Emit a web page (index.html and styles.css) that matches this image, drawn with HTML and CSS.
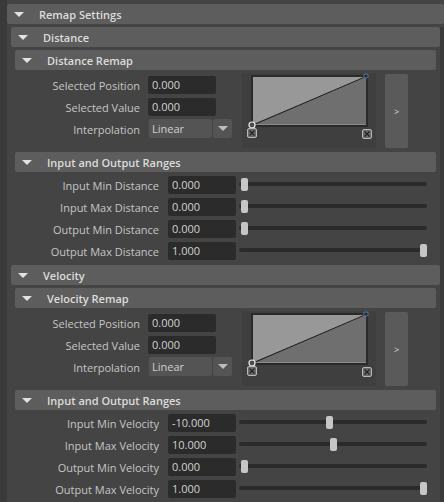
FILE: index.html
```html
<!DOCTYPE html>
<html>
<head>
<meta charset="utf-8">
<link rel="stylesheet" href="styles.css">
</head>
<body>
<div class="top">
  <div class="hdr"><span class="tri"></span>Remap Settings</div>
  <div class="top-body">

    <div class="lvl1">
      <div class="hdr"><span class="tri"></span>Distance</div>
      <div class="lvl1-body">
        <div class="lvl2">
          <div class="hdr"><span class="tri"></span>Distance Remap</div>
          <div class="remap">
            <div class="remap-left">
              <div class="row"><span class="lbl lbl-r">Selected Position</span><span class="field">0.000</span></div>
              <div class="row"><span class="lbl lbl-r">Selected Value</span><span class="field">0.000</span></div>
              <div class="row"><span class="lbl lbl-r">Interpolation</span>
                <span class="dd"><span class="dd-main">Linear</span><span class="dd-arrow"><span class="dd-tri"></span></span></span>
              </div>
            </div>
            <div class="graph">
              <svg width="134" height="75" viewBox="0 0 134 75">
                <rect x="10" y="3" width="115" height="50" fill="#6f6f6f" stroke="#2a2a2a" stroke-width="2"/>
                <polygon points="11,4 124,4 11,51" fill="#989898"/>
                <line x1="11" y1="52" x2="124" y2="3.5" stroke="#1c1c1c" stroke-width="1"/>
                <line x1="11" y1="51.5" x2="124" y2="51.5" stroke="#8a8a8a" stroke-width="1"/>
                <circle cx="124" cy="3" r="2.2" fill="none" stroke="#4a6a90" stroke-width="1.2"/>
                <circle cx="10" cy="52" r="3" fill="#4a4a4a" stroke="#eeeeee" stroke-width="1.2"/>
                <rect x="5.5" y="55.5" width="9" height="9" rx="1.5" fill="#6a6a6a" stroke="#b8b8b8"/>
                <path d="M7.5 57.5 L12.5 62.5 M12.5 57.5 L7.5 62.5" stroke="#222" stroke-width="1.2"/>
                <rect x="120.5" y="56.5" width="9" height="9" rx="1.5" fill="#6a6a6a" stroke="#b8b8b8"/>
                <path d="M122.5 58.5 L127.5 63.5 M127.5 58.5 L122.5 63.5" stroke="#222" stroke-width="1.2"/>
              </svg>
            </div>
            <div class="btn">&gt;</div>
          </div>
        </div>

        <div class="lvl2 ranges-frame">
          <div class="hdr"><span class="tri"></span>Input and Output Ranges</div>
          <div class="ranges">
            <div class="row"><span class="lbl lbl-w">Input Min Distance</span><span class="field">0.000</span><span class="slider"><span class="track"></span><span class="handle" style="left:2px"></span></span></div>
            <div class="row"><span class="lbl lbl-w">Input Max Distance</span><span class="field">0.000</span><span class="slider"><span class="track"></span><span class="handle" style="left:2px"></span></span></div>
            <div class="row"><span class="lbl lbl-w">Output Min Distance</span><span class="field">0.000</span><span class="slider"><span class="track"></span><span class="handle" style="left:2px"></span></span></div>
            <div class="row"><span class="lbl lbl-w">Output Max Distance</span><span class="field">1.000</span><span class="slider"><span class="track"></span><span class="handle" style="left:181px"></span></span></div>
          </div>
        </div>
      </div>
    </div>

    <div class="lvl1 lvl1-next">
      <div class="hdr"><span class="tri"></span>Velocity</div>
      <div class="lvl1-body">
        <div class="lvl2">
          <div class="hdr"><span class="tri"></span>Velocity Remap</div>
          <div class="remap">
            <div class="remap-left">
              <div class="row"><span class="lbl lbl-r">Selected Position</span><span class="field">0.000</span></div>
              <div class="row"><span class="lbl lbl-r">Selected Value</span><span class="field">0.000</span></div>
              <div class="row"><span class="lbl lbl-r">Interpolation</span>
                <span class="dd"><span class="dd-main">Linear</span><span class="dd-arrow"><span class="dd-tri"></span></span></span>
              </div>
            </div>
            <div class="graph">
              <svg width="134" height="75" viewBox="0 0 134 75">
                <rect x="10" y="3" width="115" height="50" fill="#6f6f6f" stroke="#2a2a2a" stroke-width="2"/>
                <polygon points="11,4 124,4 11,51" fill="#989898"/>
                <line x1="11" y1="52" x2="124" y2="3.5" stroke="#1c1c1c" stroke-width="1"/>
                <line x1="11" y1="51.5" x2="124" y2="51.5" stroke="#8a8a8a" stroke-width="1"/>
                <circle cx="124" cy="3" r="2.2" fill="none" stroke="#4a6a90" stroke-width="1.2"/>
                <circle cx="10" cy="52" r="3" fill="#4a4a4a" stroke="#eeeeee" stroke-width="1.2"/>
                <rect x="5.5" y="55.5" width="9" height="9" rx="1.5" fill="#6a6a6a" stroke="#b8b8b8"/>
                <path d="M7.5 57.5 L12.5 62.5 M12.5 57.5 L7.5 62.5" stroke="#222" stroke-width="1.2"/>
                <rect x="120.5" y="56.5" width="9" height="9" rx="1.5" fill="#6a6a6a" stroke="#b8b8b8"/>
                <path d="M122.5 58.5 L127.5 63.5 M127.5 58.5 L122.5 63.5" stroke="#222" stroke-width="1.2"/>
              </svg>
            </div>
            <div class="btn">&gt;</div>
          </div>
        </div>

        <div class="lvl2 ranges-frame">
          <div class="hdr"><span class="tri"></span>Input and Output Ranges</div>
          <div class="ranges">
            <div class="row"><span class="lbl lbl-w">Input Min Velocity</span><span class="field">-10.000</span><span class="slider"><span class="track"></span><span class="handle" style="left:87px"></span></span></div>
            <div class="row"><span class="lbl lbl-w">Input Max Velocity</span><span class="field">10.000</span><span class="slider"><span class="track"></span><span class="handle" style="left:91px"></span></span></div>
            <div class="row"><span class="lbl lbl-w">Output Min Velocity</span><span class="field">0.000</span><span class="slider"><span class="track"></span><span class="handle" style="left:2px"></span></span></div>
            <div class="row"><span class="lbl lbl-w">Output Max Velocity</span><span class="field">1.000</span><span class="slider"><span class="track"></span><span class="handle" style="left:181px"></span></span></div>
          </div>
        </div>
      </div>
    </div>

  </div>
</div>
</body>
</html>
```

FILE: styles.css
```css
* { box-sizing: border-box; }
html, body { margin: 0; padding: 0; }
body {
  width: 444px;
  height: 502px;
  overflow: hidden;
  background: #3a3a3a;
  font-family: "Open Sans", "DejaVu Sans", sans-serif;
  font-size: 11px;
  color: #c6c6c6;
}
.top {
  margin-left: 7px;
  height: 502px;
  background: #444444;
  padding-top: 4px;
  display: flex;
  flex-direction: column;
}
.top-body {
  flex: 1;
  padding-left: 4px;
  border-right: 4px solid #3a3a3a;
}
.hdr {
  height: 20px;
  margin-bottom: 3px;
  background: #5d5d5d;
  border-radius: 2px;
  display: flex;
  align-items: center;
  font-weight: 600;
  color: #dcdcdc;
  white-space: nowrap;
}
.tri {
  width: 0;
  height: 0;
  border-left: 5.5px solid transparent;
  border-right: 5.5px solid transparent;
  border-top: 5px solid #e2e2e2;
  margin: 0 15px 0 7px;
}
.lvl1-body { padding: 0 4px; }
.lvl1-next { margin-top: 4px; }
.ranges-frame { margin-top: 4px; }

.remap {
  display: flex;
  height: 75px;
}
.remap-left {
  width: 217px;
  padding-top: 3px;
  display: flex;
  flex-direction: column;
  gap: 4px;
}
.row {
  display: flex;
  align-items: center;
  height: 18px;
  white-space: nowrap;
}
.lbl { text-align: right; }
.lbl-r { width: 125px; margin-right: 8px; }
.lbl-w { width: 144px; margin-right: 9px; }
.field {
  width: 68px;
  height: 18px;
  line-height: 18px;
  background: #2b2b2b;
  border-radius: 2px;
  padding-left: 4px;
  color: #d2d2d2;
}
.dd {
  display: flex;
  height: 19px;
  margin-left: 1px;
  margin-top: -1px;
}
.dd-main {
  width: 63px;
  background: #545454;
  border-radius: 2px;
  padding-left: 3px;
  line-height: 19px;
  color: #cfcfcf;
}
.dd-arrow {
  width: 19px;
  margin-left: 1px;
  background: #545454;
  border-radius: 2px;
  display: flex;
  align-items: center;
  justify-content: center;
}
.dd-tri {
  width: 0;
  height: 0;
  border-left: 5px solid transparent;
  border-right: 5px solid transparent;
  border-top: 5px solid #bdbdbd;
}
.graph {
  width: 134px;
  height: 75px;
  margin-left: 10px;
  background: #3f3f3f;
}
.graph svg { display: block; }
.btn {
  width: 23px;
  height: 74px;
  margin-top: 1px;
  margin-left: 9px;
  background: #5a5a5a;
  border-radius: 2px;
  display: flex;
  align-items: center;
  justify-content: center;
  font-size: 9px;
  color: #dddddd;
}

.ranges {
  padding: 1px 0 1px;
  display: flex;
  flex-direction: column;
  gap: 4px;
}
.slider {
  position: relative;
  width: 188px;
  height: 18px;
  margin-left: 3px;
}
.track {
  position: absolute;
  left: 0;
  right: 0;
  top: 6px;
  height: 4px;
  border-radius: 2px;
  background: #2b2b2b;
}
.handle {
  position: absolute;
  top: 2px;
  width: 7px;
  height: 13px;
  border-radius: 2px;
  background: #c6c6c6;
}
```
